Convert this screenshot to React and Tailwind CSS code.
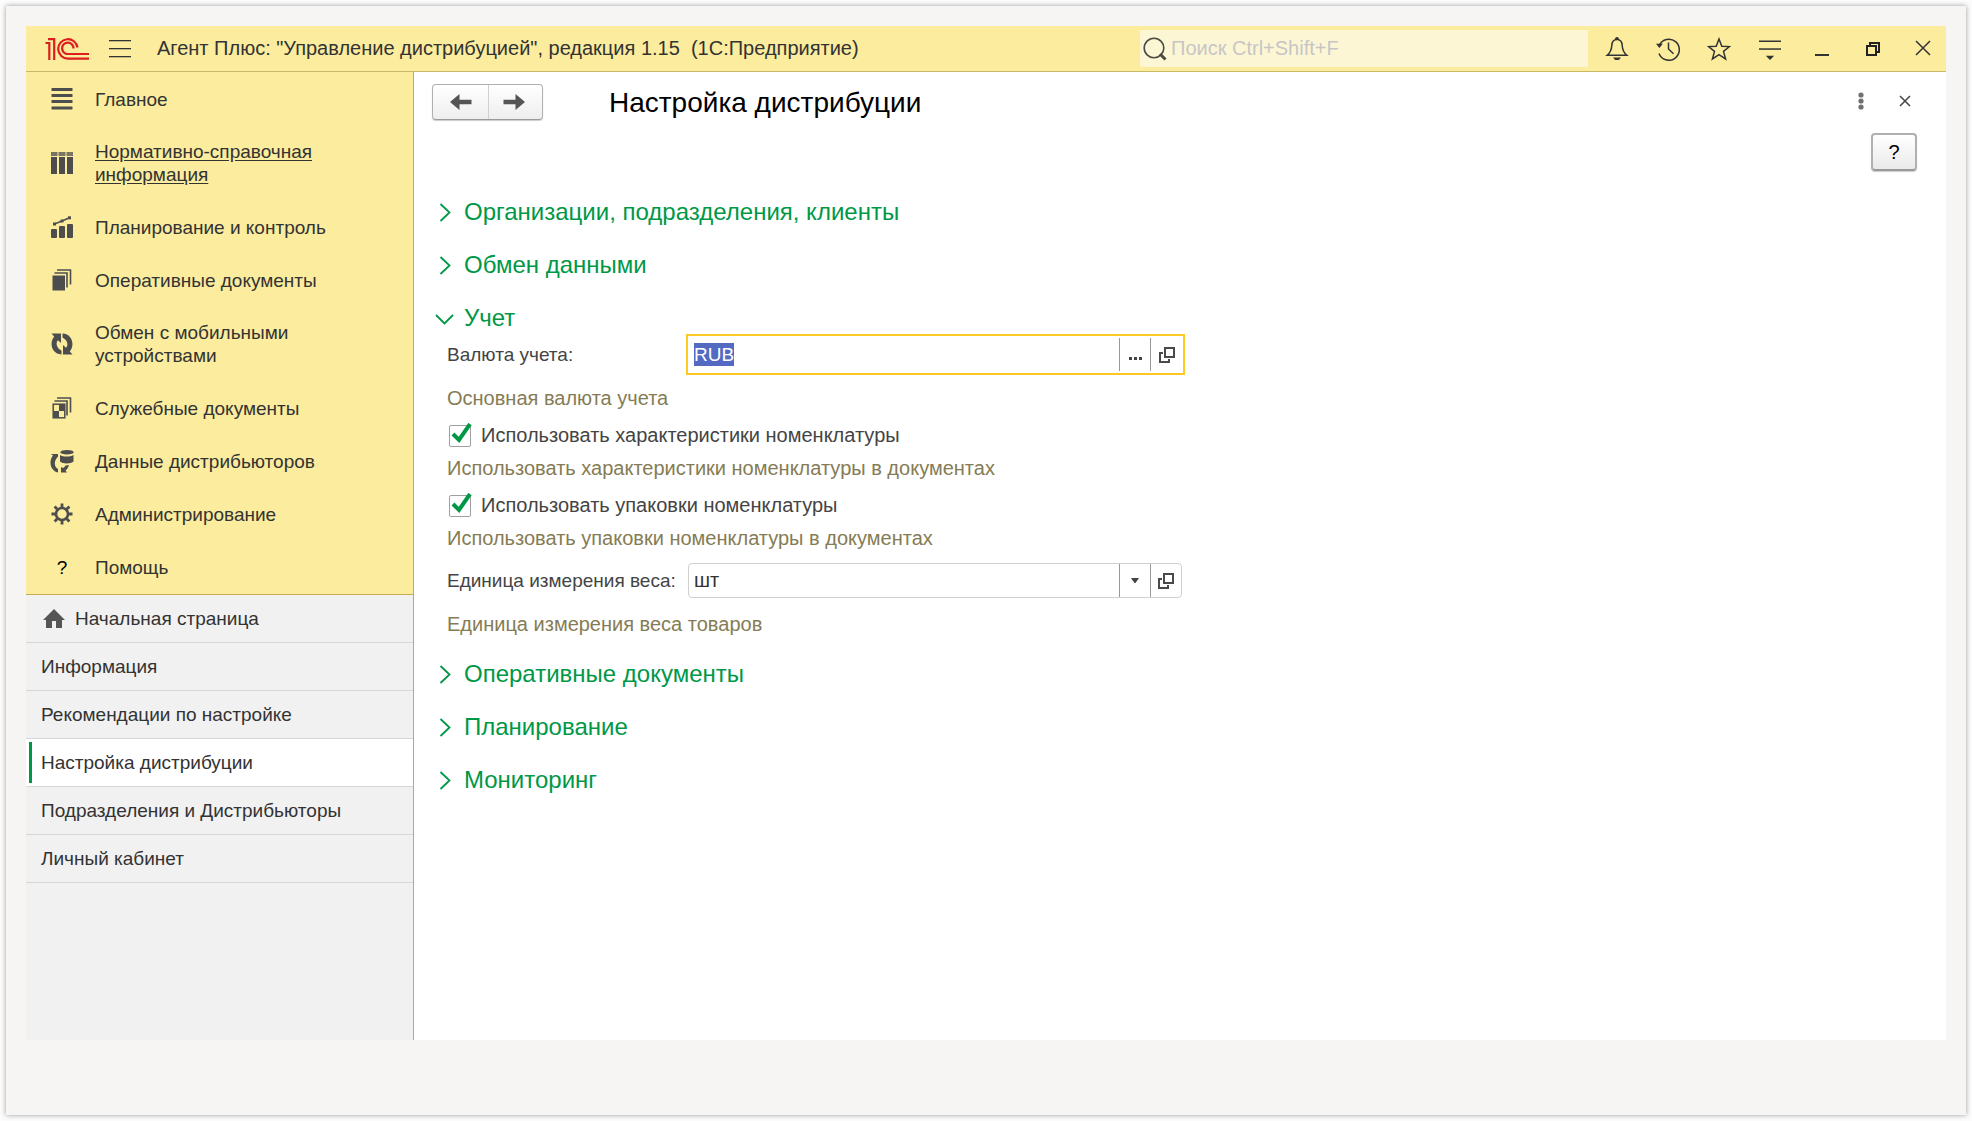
import React, { useEffect, useRef, useState } from "react";

const INK = "#4d4d4d";

function LogoIcon() {
  return (
    <svg width="44" height="22" viewBox="0 0 44 22" fill="none" stroke="#dc1e20" strokeWidth="2.2">
      <path d="M0.500 5H4.300V22" />
      <path d="M3 1.200H9.200V22" />
      <path d="M32.500 9.500A9.700 9.700 0 1 0 23 20.600H44" />
      <path d="M28.500 10.500A5.700 5.700 0 1 0 23 16H44" />
    </svg>
  );
}

function BurgerIcon() {
  return (
    <svg width="22" height="18" viewBox="0 0 22 18" fill="#333">
      <rect y="0" width="22" height="1.300" />
      <rect y="8" width="22" height="1.300" />
      <rect y="16" width="22" height="1.300" />
    </svg>
  );
}

function ListIcon() {
  return (
    <svg width="22" height="22" viewBox="0 0 22 22" fill={INK}>
      <rect x="0.500" y="0" width="21" height="3" rx="0.500" />
      <rect x="0.500" y="6" width="21" height="3" rx="0.500" />
      <rect x="0.500" y="12" width="21" height="3" rx="0.500" />
      <rect x="0.500" y="18.500" width="21" height="3" rx="0.500" />
    </svg>
  );
}

function TableIcon() {
  return (
    <svg width="22" height="22" viewBox="0 0 22 22" fill={INK}>
      <path d="M0 0H22V4H0Z" opacity="0.75" />
      <path d="M0 5H6V22H0ZM8 5H14V22H8ZM16 5H22V22H16Z" />
      <path d="M6.500 0H7.500V4H6.500ZM14.500 0H15.500V4H14.500Z" fill="#fbec9e" />
    </svg>
  );
}

function ChartIcon() {
  return (
    <svg width="22" height="22" viewBox="0 0 22 22" fill={INK}>
      <rect x="0" y="13" width="6" height="9" rx="1" />
      <rect x="8" y="10" width="6" height="12" rx="1" />
      <rect x="16" y="8" width="6" height="14" rx="1" />
      <path d="M3.500 8L11 5L18.500 1.800" fill="none" stroke={INK} strokeWidth="1.500" />
      <rect x="2" y="6.500" width="3" height="3" />
      <rect x="9.500" y="3.500" width="3" height="3" />
      <rect x="17" y="0.300" width="3" height="3" />
    </svg>
  );
}

function DocsIcon({ checker }) {
  return (
    <svg width="22" height="22" viewBox="0 0 22 22" fill={INK}>
      <path d="M6 1H19.500V15.500M3.500 4H16V18.500" fill="none" stroke={INK} strokeWidth="1.600" />
      {checker ? (
        <>
          <rect x="2.200" y="7.200" width="11.600" height="13.600" fill="#fbec9e" stroke={INK} strokeWidth="1.500" />
          <path d="M8 7H14V14H8ZM2 14H8V21H2Z" />
        </>
      ) : (
        <rect x="1.500" y="6.500" width="12.500" height="15" />
      )}
    </svg>
  );
}

function SyncIcon() {
  return (
    <svg width="22" height="22" viewBox="0 0 22 22" fill={INK}>
      <path d="M0.500 0.500H10V10L7 7.300C4.500 9.500 5.200 15 10.500 17.500V21.500C0.500 21 -2 10 3.200 3.500Z" />
      <path d="M21.500 21.500H12V12L15 14.700C17.500 12.500 16.800 7 11.500 4.500V0.500C21.500 1 24 12 18.800 18.500Z" />
    </svg>
  );
}

function DataIcon() {
  return (
    <svg width="24" height="24" viewBox="0 0 24 24" fill={INK}>
      <ellipse cx="17" cy="3.200" rx="6.500" ry="2.300" />
      <path d="M10 6C13 8 20 8 23.500 6V12.500C21 15 12.500 15 10 12.500Z" />
      <path d="M1 5H8V7.500C3.500 12 4 18 8 20V23.500C0 21.500 -1.500 12 3 6.500Z" />
      <path d="M19 16C18 19 17 20.500 15.500 21.500L17 23.500H11V18L13 19C14 18.500 15 17.500 15.500 16.500Z" />
    </svg>
  );
}

function GearIcon() {
  return (
    <svg width="22" height="22" viewBox="0 0 22 22" fill="none" stroke={INK}>
      <circle cx="11" cy="11" r="6" strokeWidth="2.600" />
      <path
        d="M11 0.500V4.500M11 17.500V21.500M0.500 11H4.500M17.500 11H21.500M3.600 3.600L6.300 6.300M15.700 15.700L18.400 18.400M3.600 18.400L6.300 15.700M15.700 6.300L18.400 3.600"
        strokeWidth="2.800"
      />
    </svg>
  );
}

function HomeIcon() {
  return (
    <svg width="22" height="20" viewBox="0 0 22 20" fill="#555">
      <path d="M11 0L22 11H19V19H13V12H9V19H3V11H0Z" />
    </svg>
  );
}

function SearchIcon() {
  return (
    <svg className="shrink-0" width="24" height="24" viewBox="0 0 24 24" fill="none" stroke="#4a4a40">
      <circle cx="11" cy="11" r="9.800" strokeWidth="1.600" />
      <path d="M17 17L22.500 22.500" strokeWidth="3" />
    </svg>
  );
}

function BellIcon() {
  return (
    <svg width="24" height="24" viewBox="0 0 24 24" fill="none" stroke="#333" strokeWidth="1.500">
      <path d="M2.200 18.300C5.500 15.500 6.500 13 6.800 8.500C7 4.500 9 2.500 12 2.500C15 2.500 17 4.500 17.200 8.500C17.500 13 18.500 15.500 21.800 18.300Z" />
      <path d="M10.800 2.200C10.800 0.300 13.200 0.300 13.200 2.200Z" fill="#333" />
      <path d="M8 20.500H16L13.800 23H10.200Z" fill="#333" stroke="none" />
    </svg>
  );
}

function HistoryIcon() {
  return (
    <svg width="24" height="24" viewBox="0 0 24 24" fill="none" stroke="#333" strokeWidth="1.500">
      <path d="M3.300 8.300A10.500 10.500 0 1 1 3 16.500" />
      <path d="M0 6.800H6.800L3.400 11Z" fill="#333" stroke="none" />
      <path d="M12.500 5.500V12L17.500 16.800" />
    </svg>
  );
}

function StarIcon() {
  return (
    <svg width="24" height="24" viewBox="0 0 24 24" fill="none" stroke="#333" strokeWidth="1.500">
      <path d="M12 2L14.800 9.300L22.500 9.600L16.500 14.400L18.600 22L12 17.700L5.400 22L7.500 14.400L1.500 9.600L9.200 9.300Z" />
    </svg>
  );
}

function MenuIcon() {
  return (
    <svg width="24" height="24" viewBox="0 0 24 24" fill="#333">
      <rect x="1" y="3.500" width="22" height="1.500" />
      <rect x="1" y="11.300" width="22" height="1.500" />
      <path d="M7.800 18.800H16.200L12 23Z" />
    </svg>
  );
}

function MinimizeIcon() {
  return (
    <svg width="24" height="24" viewBox="0 0 24 24" fill="#333">
      <rect x="6" y="17" width="14" height="2" />
    </svg>
  );
}

function RestoreIcon() {
  return (
    <svg width="24" height="24" viewBox="0 0 24 24" fill="none" stroke="#222" strokeWidth="2">
      <path d="M7 9H16V18H7Z" />
      <path d="M10 9V6H19V15H16" />
    </svg>
  );
}

function CloseIcon() {
  return (
    <svg width="24" height="24" viewBox="0 0 24 24" fill="none" stroke="#333" strokeWidth="1.500">
      <path d="M5 4L19 18M19 4L5 18" />
    </svg>
  );
}

function OpenIcon() {
  return (
    <svg width="16" height="16" viewBox="0 0 16 16" fill="none" stroke="#4a4a4a" strokeWidth="2">
      <path d="M6 1H15V10H6Z" />
      <path d="M4 6H1V15H10V12" />
    </svg>
  );
}

const sections = [
  { label: "Главное", icon: <ListIcon /> },
  { label: "Нормативно-справочная информация", icon: <TableIcon />, underline: true },
  { label: "Планирование и контроль", icon: <ChartIcon /> },
  { label: "Оперативные документы", icon: <DocsIcon /> },
  { label: "Обмен с мобильными устройствами", icon: <SyncIcon /> },
  { label: "Служебные документы", icon: <DocsIcon checker /> },
  { label: "Данные дистрибьюторов", icon: <DataIcon /> },
  { label: "Администрирование", icon: <GearIcon /> },
  { label: "Помощь", icon: <span className="text-black">?</span> },
];

const pages = [
  { label: "Начальная страница", icon: <HomeIcon /> },
  { label: "Информация" },
  { label: "Рекомендации по настройке" },
  { label: "Настройка дистрибуции", active: true },
  { label: "Подразделения и Дистрибьюторы" },
  { label: "Личный кабинет" },
];

const tools = [
  { label: "Уведомления", icon: <BellIcon /> },
  { label: "История", icon: <HistoryIcon /> },
  { label: "Избранное", icon: <StarIcon /> },
  { label: "Настройки", icon: <MenuIcon /> },
  { label: "Свернуть", icon: <MinimizeIcon /> },
  { label: "Восстановить", icon: <RestoreIcon /> },
  { label: "Закрыть", icon: <CloseIcon /> },
];

function TopBar() {
  return (
    <header className="flex h-[46px] items-center border-b border-[#c8b964] bg-[#fbec9e] pr-[11px] pl-[19px]">
      <LogoIcon />
      <button type="button" aria-label="Меню" className="ml-5">
        <BurgerIcon />
      </button>
      <h1 className="ml-[26px] flex-1 whitespace-pre">
        {'Агент Плюс: "Управление дистрибуцией", редакция 1.15  (1С:Предприятие)'}
      </h1>
      <label className="flex h-[37px] w-[448px] items-center gap-1 rounded-xs bg-[#fdf6d5] pl-[3px]">
        <SearchIcon />
        <input
          type="search"
          aria-label="Поиск"
          placeholder="Поиск Ctrl+Shift+F"
          className="min-w-0 flex-1 bg-transparent outline-none placeholder:text-[#c6c6c6]"
        />
      </label>
      <div className="ml-[17px] flex gap-[27px]">
        {tools.map((t) => (
          <button key={t.label} type="button" aria-label={t.label}>
            {t.icon}
          </button>
        ))}
      </div>
    </header>
  );
}

function Sidebar() {
  return (
    <aside className="flex w-[388px] shrink-0 flex-col border-r border-[#b5ae64] bg-[#f1f1f1] text-[19px]">
      <nav className="border-b border-[#c3ae52] bg-[#fbec9e] pb-px">
        {sections.map((s) => (
          <a key={s.label} href="#" className="flex min-h-[53px] items-center pt-[15px] pr-20 pb-[14px] pl-6">
            <span className="flex w-6 shrink-0 justify-center">{s.icon}</span>
            <span className={s.underline ? "ml-[21px] underline underline-offset-2" : "ml-[21px]"}>{s.label}</span>
          </a>
        ))}
      </nav>
      <nav>
        {pages.map((p) => (
          <a
            key={p.label}
            href="#"
            className={
              p.active
                ? "flex h-12 items-center border-b border-[#d6d6d6] bg-white py-[3px] pl-[3px]"
                : "flex h-12 items-center border-b border-[#d6d6d6] pl-[15px]"
            }
          >
            {p.active && <span className="mr-[9px] w-[3px] self-stretch bg-[#009846]" />}
            {p.icon && <span className="mr-[10px] ml-[2px]">{p.icon}</span>}
            {p.label}
          </a>
        ))}
      </nav>
    </aside>
  );
}

function Group({ title, open, children }) {
  return (
    <section>
      <h3>
        <button
          type="button"
          aria-expanded={!!open}
          className="flex h-[53px] items-center pl-0.5 text-[24px] leading-7 text-[#009846]"
        >
          <svg className="mr-[10px]" width="20" height="20" viewBox="0 0 20 20" fill="none" stroke="#009846" strokeWidth="1.800">
            <path d={open ? "M2 7L10.500 15.500L19 7" : "M6.500 2L15.500 10.500L6.500 19"} />
          </svg>
          {title}
        </button>
      </h3>
      {children}
    </section>
  );
}

function CheckRow({ id, label }) {
  const [on, setOn] = useState(true);
  return (
    <div className="flex h-[35px] items-center">
      <span className="relative ml-0.5 flex">
        <input
          id={id}
          type="checkbox"
          checked={on}
          onChange={(e) => setOn(e.target.checked)}
          className="size-[22px] appearance-none rounded-xs border border-[#a0a0a0] bg-white"
        />
        {on && (
          <svg className="pointer-events-none absolute -top-0.5 left-0.5" width="22" height="22" viewBox="0 0 22 22" fill="none">
            <path d="M2 11L8 17L19 1" stroke="#009846" strokeWidth="4" />
          </svg>
        )}
      </span>
      <label htmlFor={id} className="ml-[10px]">
        {label}
      </label>
    </div>
  );
}

function Hint({ children }) {
  return <p className="mb-[5px] flex h-[30px] items-center text-[#857c55]">{children}</p>;
}

function AccountingForm() {
  const currency = useRef(null);
  useEffect(() => {
    currency.current.focus();
    currency.current.select();
  }, []);
  return (
    <div className="-mt-[10px] pb-[3px] pl-[15px] text-[#444]">
      <div className="mb-2 flex items-center">
        <label htmlFor="currency" className="w-[239px] text-[19px]">
          Валюта учета:
        </label>
        <div className="flex h-[41px] w-[499px] items-center border-2 border-[#fcca20] bg-white">
          <input
            id="currency"
            ref={currency}
            defaultValue="RUB"
            className="ml-[6px] h-[23px] min-w-0 flex-1 text-[19px] leading-[23px] text-[#333] outline-none selection:bg-[#5369c2] selection:text-white"
          />
          <button type="button" aria-label="Выбрать" className="flex h-[33px] w-[31px] items-center justify-center border-l border-[#999]">
            <svg width="13" height="13" viewBox="0 0 13 13" fill="#444">
              <path d="M0 9H3V12H0ZM5 9H8V12H5ZM10 9H13V12H10Z" />
            </svg>
          </button>
          <button type="button" aria-label="Открыть" className="flex h-[33px] w-[33px] items-center justify-center border-l border-[#999]">
            <OpenIcon />
          </button>
        </div>
      </div>
      <Hint>Основная валюта учета</Hint>
      <CheckRow id="features" label="Использовать характеристики номенклатуры" />
      <Hint>Использовать характеристики номенклатуры в документах</Hint>
      <CheckRow id="packs" label="Использовать упаковки номенклатуры" />
      <Hint>Использовать упаковки номенклатуры в документах</Hint>
      <div className="mt-[10px] mb-[11px] flex items-center">
        <label htmlFor="weight" className="w-[241px] text-[19px]">
          Единица измерения веса:
        </label>
        <div className="flex h-[35px] w-[494px] items-stretch rounded-sm border border-[#d0d0d0] bg-white">
          <div className="relative flex flex-1">
            <select id="weight" className="w-full appearance-none pl-[5px] text-[#333] outline-none">
              <option>шт</option>
            </select>
            <span className="pointer-events-none absolute inset-y-0 right-0 flex w-[31px] items-center justify-center border-l border-[#999]">
              <svg width="8" height="6" viewBox="0 0 8 6" fill="#444">
                <path d="M0 0H8L4.500 5H3.500Z" />
              </svg>
            </span>
          </div>
          <button type="button" aria-label="Открыть" className="flex w-[31px] items-center justify-center border-l border-[#999]">
            <OpenIcon />
          </button>
        </div>
      </div>
      <Hint>Единица измерения веса товаров</Hint>
    </div>
  );
}

function Arrow({ right }) {
  return (
    <svg width="22" height="16" viewBox="0 0 22 16" fill="#555">
      <path d={right ? "M22 8L12.500 0V5.800H0.500V10.200H12.500V16Z" : "M0 8L9.500 0V5.800H21.500V10.200H9.500V16Z"} />
    </svg>
  );
}

export default function App() {
  return (
    <div className="flex min-h-screen flex-col bg-[#fcfcfc] p-1.5 font-['Liberation_Sans',Arial,sans-serif] text-[20px] leading-[23px] text-[#333]">
      <div className="flex flex-1 flex-col bg-[#f6f5f3] px-5 pt-5 pb-[75px] shadow-[0_0_5px_#999]">
        <TopBar />
        <div className="flex flex-1">
          <Sidebar />
          <main className="min-w-0 flex-1 bg-white pt-3 pr-[29px] pl-[18px]">
            <div className="flex h-9 items-center">
              <div className="flex h-9 rounded-sm border border-[#b0b0b0] border-b-[#999] bg-linear-to-b from-white to-[#eee] shadow-[0_1px_1px_#ccc]">
                <button type="button" aria-label="Назад" className="flex w-[56px] items-center justify-center border-r border-[#d0d0d0]">
                  <Arrow />
                </button>
                <button type="button" aria-label="Вперед" className="flex w-[53px] items-center justify-center pr-1">
                  <Arrow right />
                </button>
              </div>
              <h2 className="ml-[66px] flex-1 pt-0.5 text-[28px] leading-8 text-black">Настройка дистрибуции</h2>
              <button type="button" aria-label="Еще" className="mr-8 flex h-[34px] items-center self-start">
                <svg width="6" height="18" viewBox="0 0 6 18" fill="#707070">
                  <circle cx="3" cy="3" r="2.600" />
                  <circle cx="3" cy="9" r="2.600" />
                  <circle cx="3" cy="15" r="2.600" />
                </svg>
              </button>
              <button type="button" aria-label="Закрыть форму" className="mr-[3px] flex h-[34px] items-center self-start">
                <svg width="18" height="18" viewBox="0 0 18 18" fill="none" stroke="#444" strokeWidth="1.500">
                  <path d="M4 4L14 14M14 4L4 14" />
                </svg>
              </button>
            </div>
            <div className="mt-[13px] flex justify-end">
              <button
                type="button"
                aria-label="Справка"
                className="h-[38px] w-[46px] rounded-sm border-2 border-[#b0b0b0] border-b-[#999] bg-linear-to-b from-white to-[#eaeaea] text-black shadow-[0_1px_1px_#ccc]"
              >
                ?
              </button>
            </div>
            <div className="mt-[14px]">
              <Group title="Организации, подразделения, клиенты" />
              <Group title="Обмен данными" />
              <Group title="Учет" open>
                <AccountingForm />
              </Group>
              <Group title="Оперативные документы" />
              <Group title="Планирование" />
              <Group title="Мониторинг" />
            </div>
          </main>
        </div>
      </div>
    </div>
  );
}
